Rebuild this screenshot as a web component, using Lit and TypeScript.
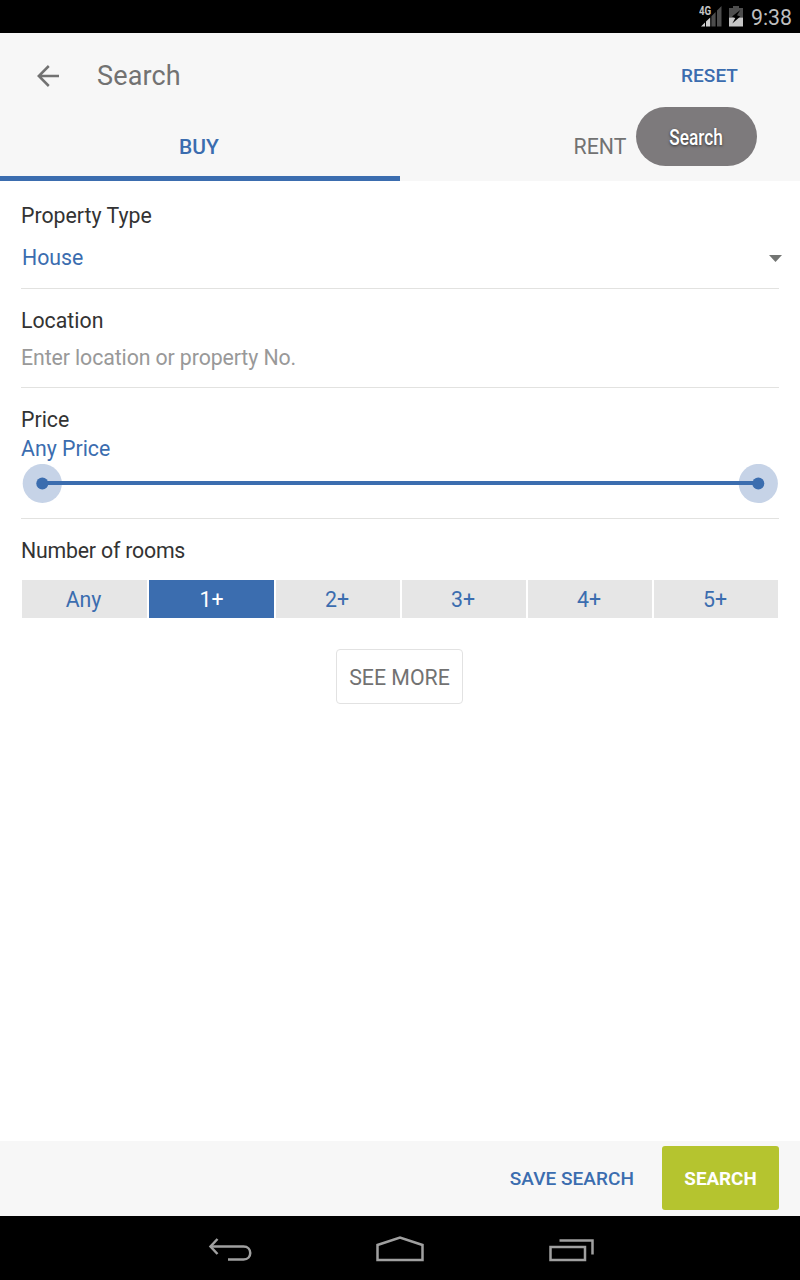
import { LitElement, html, css, svg } from "lit";
import { customElement, state } from "lit/decorators.js";
import { classMap } from "lit/directives/class-map.js";

@customElement("app-root")
class AppRoot extends LitElement {
  @state() private rooms = "1+";

  static styles = css`
    :host {
      display: flex;
      flex-direction: column;
      position: relative;
      width: 800px;
      height: 1280px;
      overflow: hidden;
      background: #fff;
      font-family: Roboto, "Noto Sans", sans-serif;
      font-size: 21.3px;
      line-height: 24px;
      color: #333;
      white-space: nowrap;
    }
    * { box-sizing: border-box; }
    svg { display: block; flex: none; }
    button { font: inherit; border: 0; padding: 0; margin: 0; background: none; color: inherit; }
    .status {
      height: 33px;
      flex: none;
      background: #000;
      color: #bebebe;
      display: flex;
      justify-content: flex-end;
      align-items: center;
      padding: 1px 8px 0 0;
    }
    .clock { padding-top: 2px; }
    .signal { margin-right: 6px; }
    .battery { margin-right: 8px; }
    .head { height: 148px; flex: none; background: #f7f7f7; display: flex; flex-direction: column; }
    .bar { height: 85px; display: flex; align-items: center; padding: 0 62px 0 36px; }
    .title { margin-left: 37px; flex: 1; font-size: 27px; letter-spacing: 0.15px; line-height: 32px; color: #727272; }
    .action { font-size: 19px; letter-spacing: 0.05px; font-weight: 500; color: #3b6daf; }
    .tabs { height: 63px; display: grid; grid-template-columns: 1fr 1fr; }
    .tab { border-bottom: 5px solid transparent; color: #727272; }
    .tab.on { border-color: #3b6daf; color: #3b6daf; font-weight: 500; font-size: 21px; padding-right: 2px; }
    .bubble {
      position: absolute;
      left: 636px;
      top: 107px;
      width: 121px;
      height: 59px;
      border-radius: 30px;
      background: #7d7a7c;
      color: #fff;
      display: flex;
      align-items: center;
      justify-content: center;
      text-shadow: 0 1px 3px rgba(0, 0, 0, 0.6);
    }
    .narrow { transform: scaleX(0.81); padding-top: 3px; font-weight: 500; }
    .form { flex: 1; padding: 0 21px; display: flex; flex-direction: column; }
    .group { border-bottom: 1px solid #e2e2e0; flex: none; }
    .type { height: 108px; padding-top: 23px; }
    .place { height: 99px; padding-top: 20px; }
    .price { height: 131px; padding-top: 20px; }
    .count { padding-top: 20px; }
    .count > div:first-child { letter-spacing: -0.2px; }
    .blue { color: #3b6daf; }
    .select { display: flex; justify-content: space-between; align-items: center; margin: 18px -3px 0 1px; }
    .hint { color: #999; margin-top: 13px; letter-spacing: -0.1px; }
    .amount { margin-top: 5px; }
    .slider { margin-top: 3px; }
    .chips { display: grid; grid-template-columns: 125px 125px repeat(4, 124px); column-gap: 2px; margin: 17px 0 0 1px; letter-spacing: 0; }
    .chip { height: 38px; background: #e6e6e6; color: #3b6daf; padding: 2px 2px 0 0; }
    .chip.on { background: #3b6daf; color: #fff; padding-right: 0; }
    .more {
      align-self: center;
      width: 127px;
      height: 55px;
      margin: 31px 1px 0 0;
      border: 1px solid #e2e2e2;
      border-radius: 4px;
      color: #727272;
      padding-top: 3px;
    }
    .foot {
      height: 75px;
      flex: none;
      background: #f7f7f7;
      display: flex;
      align-items: center;
      justify-content: flex-end;
      gap: 28px;
      padding: 0 21px 1px 0;
    }
    .foot .action { padding-top: 2px; }
    .go { width: 117px; height: 64px; border-radius: 3px; background: #b5c42f; color: #fff; font-size: 18.8px; font-weight: 700; padding-top: 2px; }
    .nav { height: 64px; flex: none; background: #000; }
  `;

  private slider() {
    return html`<svg class="slider" width="758" height="40" viewBox="0 0 758 40">
      <g fill="#c6d3e7"><circle cx="21.3" cy="19.5" r="19.6"/><circle cx="737.3" cy="19.5" r="19.6"/></g>
      <rect x="21" y="17" width="716" height="4" fill="#3b6daf"/>
      <g fill="#3b6daf"><circle cx="21.3" cy="19.5" r="6"/><circle cx="737.3" cy="19.5" r="6"/></g>
    </svg>`;
  }

  render() {
    const rooms = ["Any", "1+", "2+", "3+", "4+", "5+"];
    return html`
      <div class="status">
        <svg class="signal" width="24" height="24" viewBox="0 0 24 24">
          <path d="M2 21.5L6 17.5V21.5Z" fill="#cfcfcf"/>
          <path d="M7 16.5L11.2 12.4V21.5H7Z" fill="#cfcfcf"/>
          <path d="M12.4 11.2L16.6 7V21.5H12.4ZM18 5.6L22.5 1V21.5H18Z" fill="#4d4d4d"/>
          <text transform="translate(0 10) scale(.78 1)" font-size="12.5" font-weight="700" fill="#c4c4c4" stroke="#000" stroke-width="1.5" paint-order="stroke">4G</text>
        </svg>
        <svg class="battery" width="14" height="24" viewBox="0 0 14 24">
          <path d="M4 1H10V3H14V12.5H0V3H4Z" fill="#4d4d4d"/>
          <path d="M0 12.5H14V21.5H0Z" fill="#c6c6c6"/>
          <path d="M11.3 5L3 11.5L6.3 13L3.3 18.5L11.3 11.6L8 10.2Z" fill="#000"/>
        </svg>
        <span class="clock">9:38</span>
      </div>
      <div class="head">
        <div class="bar">
          <svg width="24" height="24" viewBox="0 0 24 24" fill="none" stroke="#727272" stroke-width="2.5">
            <path d="M23 12H3M12.8 2L2.8 12L12.8 22"/>
          </svg>
          <span class="title">Search</span>
          <button class="action">RESET</button>
        </div>
        <div class="tabs">
          <button class="tab on">BUY</button>
          <button class="tab">RENT</button>
        </div>
      </div>
      <div class="form">
        <div class="group type">
          <div>Property Type</div>
          <div class="select blue"><span>House</span>
            <svg width="13" height="8" viewBox="0 0 13 8"><path d="M0 1H13L6.5 8Z" fill="#737573"/></svg>
          </div>
        </div>
        <div class="group place"><div>Location</div><div class="hint">Enter location or property No.</div></div>
        <div class="group price">
          <div>Price</div><div class="amount blue">Any Price</div>${this.slider()}
        </div>
        <div class="count">
          <div>Number of rooms</div>
          <div class="chips">
            ${rooms.map((r) => html`<button class=${classMap({ chip: true, on: r === this.rooms })} @click=${() => (this.rooms = r)}>${r}</button>`)}
          </div>
        </div>
        <button class="more">SEE MORE</button>
      </div>
      <div class="foot">
        <button class="action">SAVE SEARCH</button>
        <button class="go">SEARCH</button>
      </div>
      <div class="nav">
        <svg width="800" height="64" viewBox="0 0 800 64" fill="none" stroke="#a0a0a0" stroke-width="2.5">
          <path d="M228 43.5H243.5C252.5 43.5 252.5 30.500 243.5 30.500H211" transform="translate(0 0)"/>
          <path d="M217.5 23L210.5 30.5L217.5 38"/>
          <path d="M377.5 44V29L400 21.5L422.500 29V44Z"/>
          <path d="M550.500 31H585V44H550.500ZM559.500 24.500H592.500V38.500"/>
        </svg>
      </div>
      <div class="bubble"><span class="narrow">Search</span></div>
    `;
  }
}
